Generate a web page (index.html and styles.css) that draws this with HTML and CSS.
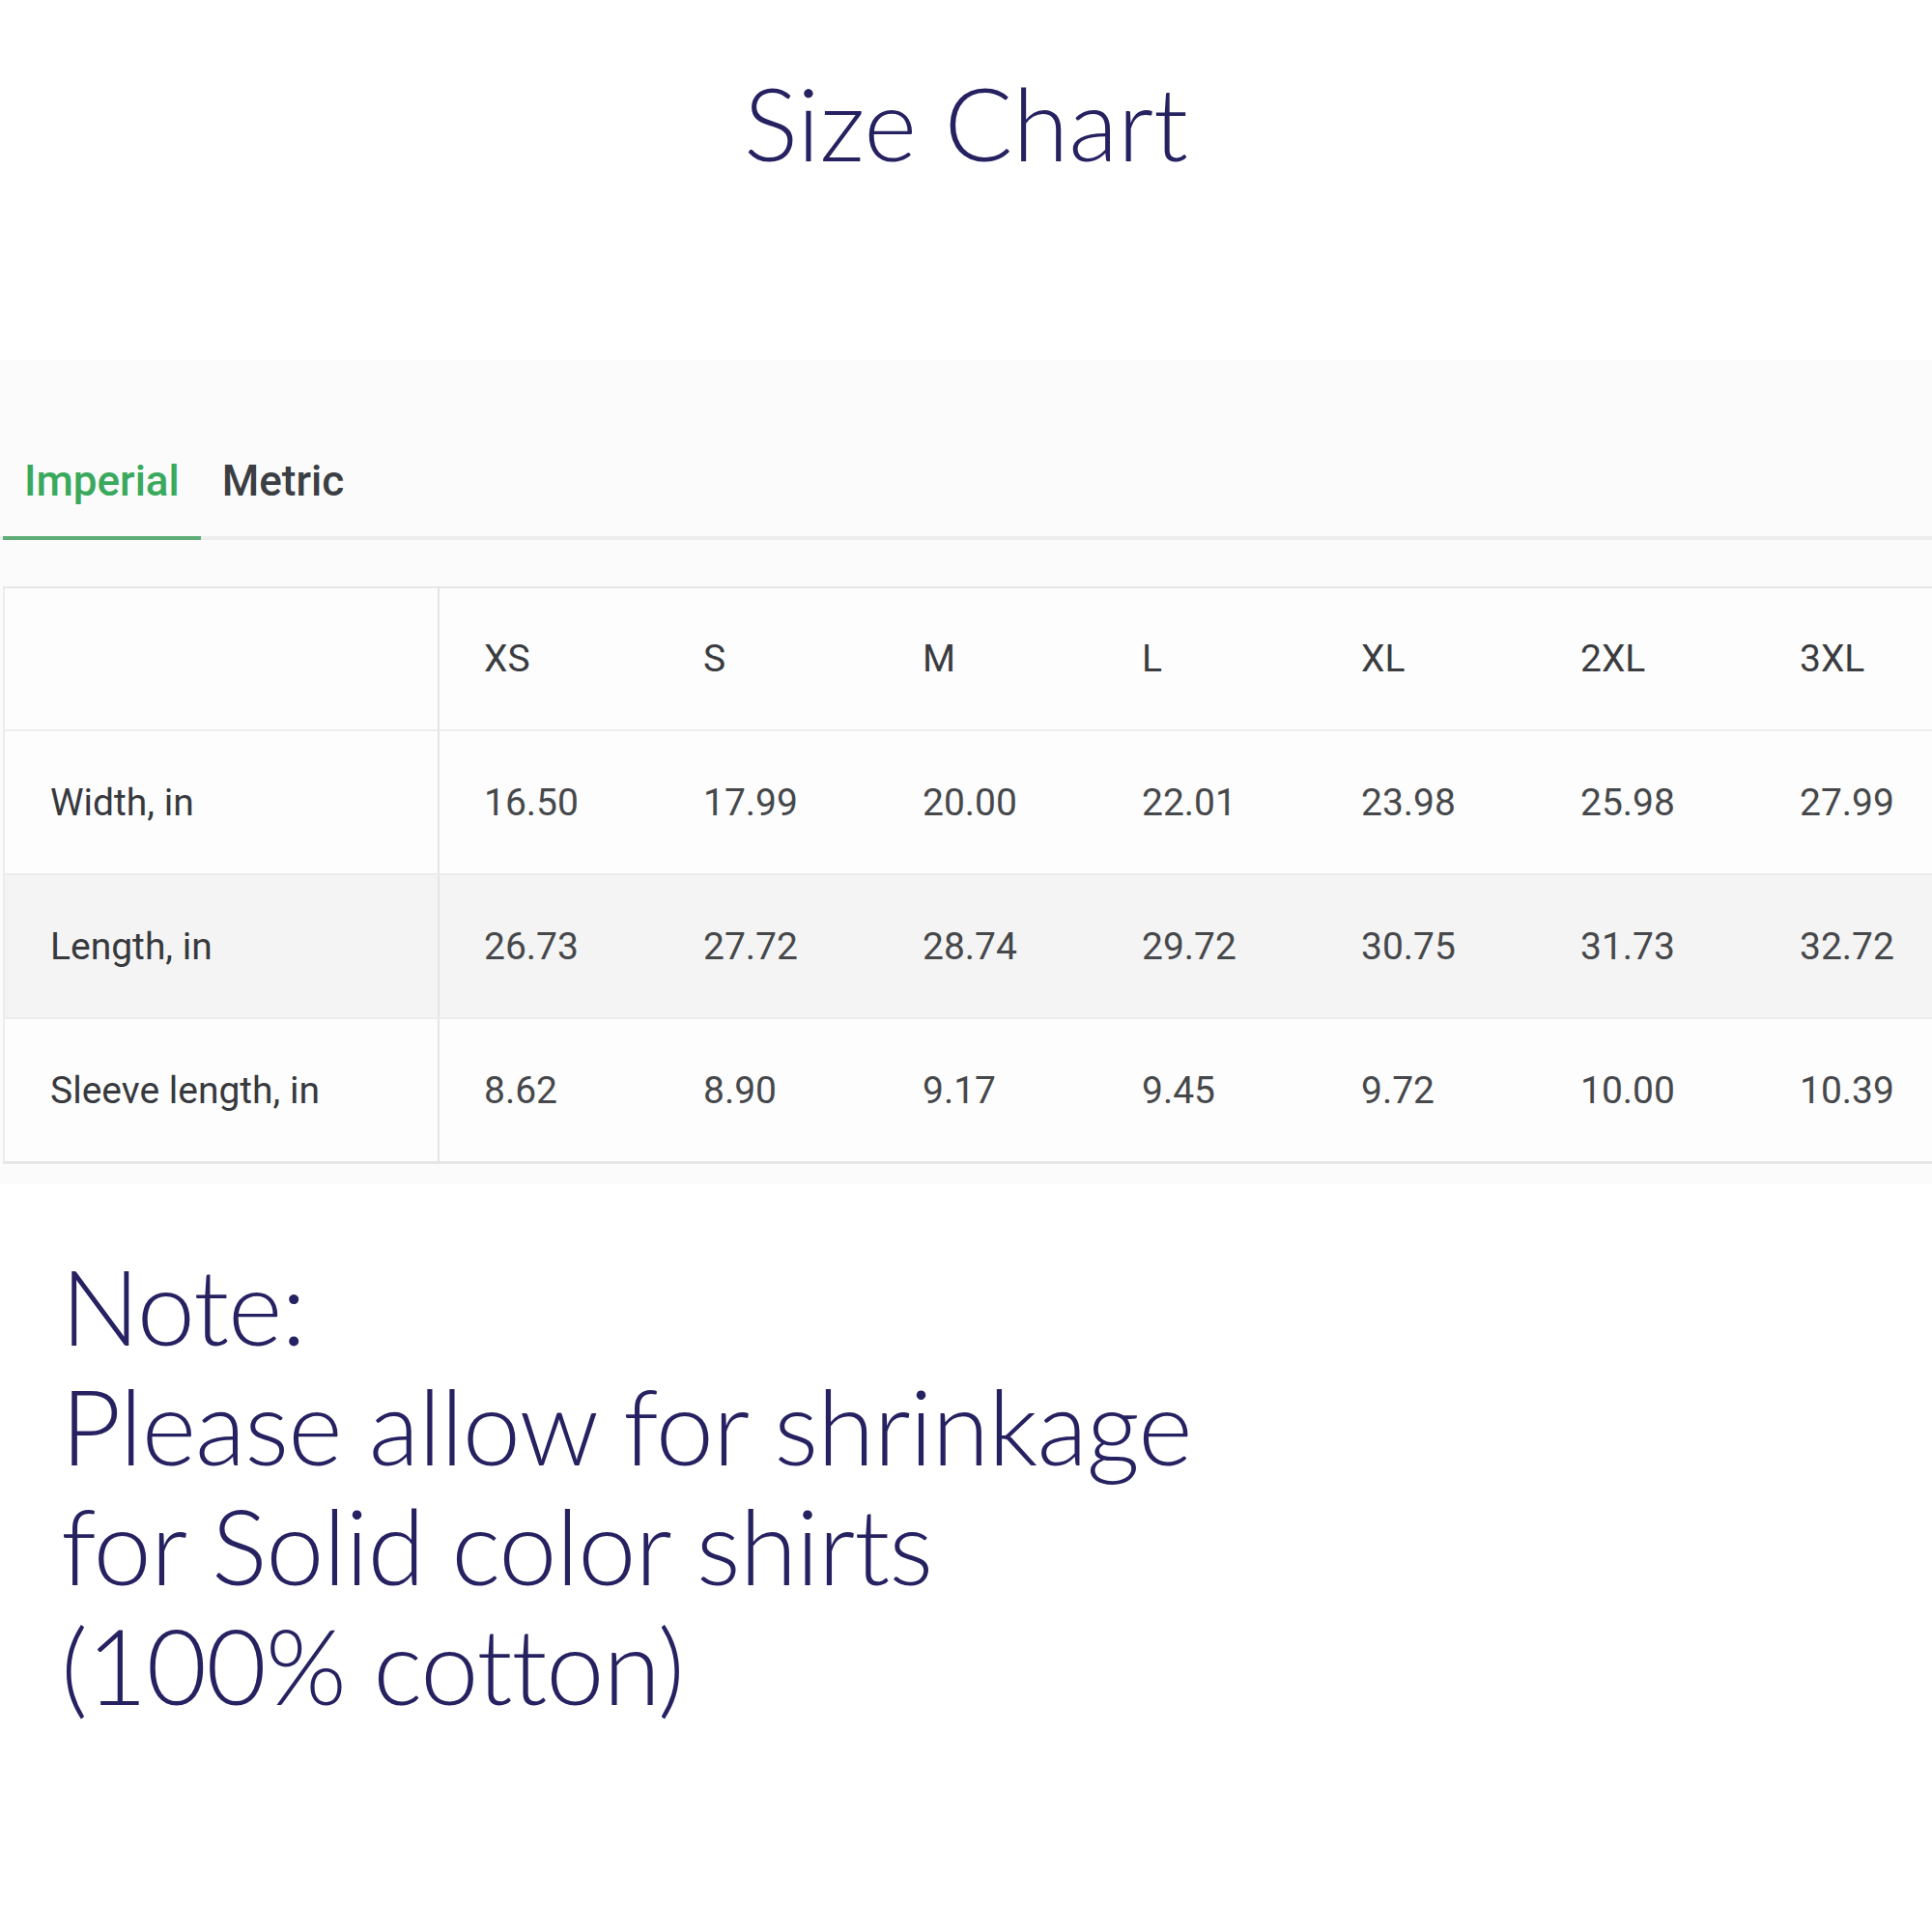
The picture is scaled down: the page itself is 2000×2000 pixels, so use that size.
FILE: index.html
```html
<!DOCTYPE html>
<html lang="en">
<head>
<meta charset="utf-8">
<title>Size Chart</title>
<link rel="stylesheet" href="styles.css">
</head>
<body>
<h1 class="title">Size Chart</h1>
<section class="panel">
  <div class="tabs">
    <div class="tab tab-active">Imperial</div>
    <div class="tab">Metric</div>
  </div>
  <div class="table-wrap">
    <table class="chart">
      <thead>
        <tr>
          <th class="label-cell"></th>
          <th>XS</th><th>S</th><th>M</th><th>L</th><th>XL</th><th>2XL</th><th>3XL</th>
        </tr>
      </thead>
      <tbody>
        <tr>
          <td class="label-cell">Width, in</td>
          <td>16.50</td><td>17.99</td><td>20.00</td><td>22.01</td><td>23.98</td><td>25.98</td><td>27.99</td>
        </tr>
        <tr class="striped">
          <td class="label-cell">Length, in</td>
          <td>26.73</td><td>27.72</td><td>28.74</td><td>29.72</td><td>30.75</td><td>31.73</td><td>32.72</td>
        </tr>
        <tr>
          <td class="label-cell">Sleeve length, in</td>
          <td>8.62</td><td>8.90</td><td>9.17</td><td>9.45</td><td>9.72</td><td>10.00</td><td>10.39</td>
        </tr>
      </tbody>
    </table>
  </div>
</section>
<p class="note">Note:<br>Please allow for shrinkage<br>for Solid color shirts<br>(100% cotton)</p>
</body>
</html>
```
FILE: styles.css
```css
html, body {
  margin: 0;
  padding: 0;
  background: #ffffff;
}
body {
  width: 2000px;
  overflow: hidden;
}
.title {
  margin: 63px 0 0;
  font-family: Lato, "Liberation Sans", sans-serif;
  font-weight: 300;
  font-size: 105px;
  line-height: 127px;
  text-align: center;
  color: #262261;
}
.panel {
  margin-top: 183px;
  background: #fbfbfb;
  padding-bottom: 21px;
  font-family: Roboto, "Liberation Sans", sans-serif;
}
.tabs {
  display: flex;
  padding-top: 99px;
  padding-left: 3px;
  border-bottom: 4px solid #eeeeee;
}
.tab {
  padding: 0 22px 31px;
  font-size: 44px;
  line-height: 52px;
  font-weight: 500;
  color: #3b3e42;
  margin-bottom: -4px;
  border-bottom: 4px solid transparent;
}
.tab-active {
  color: #3aa95d;
  border-bottom-color: #5fae78;
}
.table-wrap {
  margin-top: 48px;
  padding-left: 3px;
}
.chart {
  border-collapse: collapse;
  table-layout: fixed;
  width: 2039px;
  background: #fdfdfd;
  border-top: 2px solid #e8e8e8;
  border-left: 2px solid #ececec;
  border-bottom: 3px solid #e6e6e6;
  color: #46484b;
}
.chart th,
.chart td {
  height: 147px;
  padding: 0 0 0 46px;
  text-align: left;
  vertical-align: middle;
  font-size: 39px;
  font-weight: 400;
  width: 181px;
  border-bottom: 2px solid #ececec;
}
.chart th {
  color: #3a3c40;
  height: 146px;
}
.chart tbody tr:last-child td {
  border-bottom: none;
}
.chart .label-cell {
  width: 401px;
  padding-left: 47px;
  border-right: 2px solid #e4e4e4;
  color: #37393d;
}
.striped td {
  background: #f4f4f4;
}
.note {
  margin: 63px 0 0;
  padding-left: 63px;
  font-family: Lato, "Liberation Sans", sans-serif;
  font-weight: 300;
  font-size: 108px;
  letter-spacing: -1px;
  line-height: 124px;
  color: #262261;
}
```
